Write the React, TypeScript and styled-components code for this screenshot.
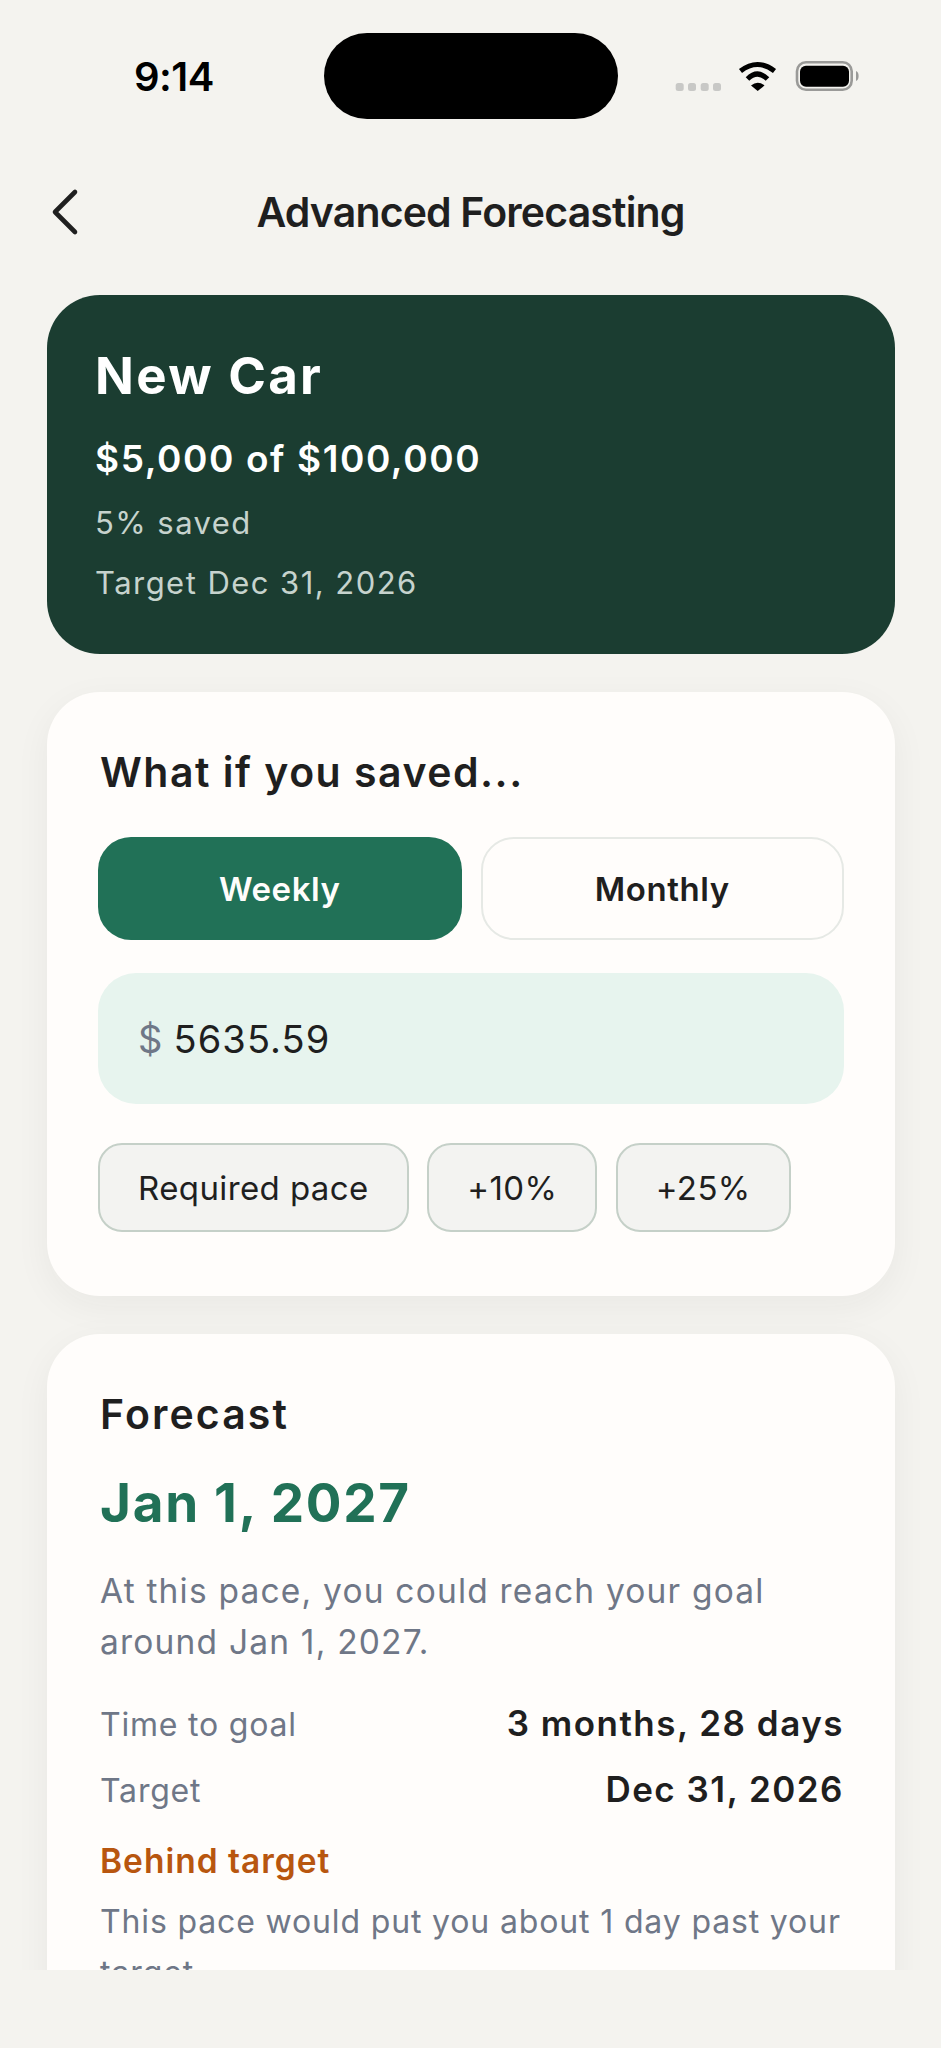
import React from "react";
import styled, { createGlobalStyle } from "styled-components";

const Global = createGlobalStyle`
  html, body { margin: 0; padding: 0; background: #f4f3ef; }
  body { font-family: Inter, "Liberation Sans", sans-serif; color: #1f1f1f; }
`;

const Screen = styled.div`
  width: 941px;
  height: 2048px;
  background: #f4f3ef;
  display: flex;
  flex-direction: column;
  overflow: hidden;
`;

const StatusBar = styled.div`
  height: 176px;
  position: relative;
  box-sizing: border-box;
  flex: none;
`;

const Time = styled.div`
  position: absolute;
  left: 134px;
  top: 55px;
  font-size: 40px;
  line-height: 44px;
  font-weight: 600;
  color: #000;
  letter-spacing: -0.5px;
`;

const Island = styled.div`
  position: absolute;
  left: 324px;
  top: 33px;
  width: 294px;
  height: 86px;
  border-radius: 43px;
  background: #000;
`;

const StatusIcons = styled.svg`
  position: absolute;
  left: 670px;
  top: 55px;
`;

const Header = styled.div`
  height: 72px;
  flex: none;
  display: flex;
  align-items: center;
  justify-content: center;
  position: relative;
`;

const BackIcon = styled.svg`
  position: absolute;
  left: 50px;
  top: 12px;
`;

const Title = styled.h1`
  margin: 0;
  font-size: 41px;
  line-height: 48px;
  font-weight: 600;
  letter-spacing: -0.85px;
  color: #1f1f1f;
`;

const Scroll = styled.div`
  height: 1722px;
  padding: 47px 46px 0 47px;
  box-sizing: border-box;
  overflow: hidden;
  flex: none;
  display: flex;
  flex-direction: column;
  gap: 38px;
`;

const Hero = styled.section`
  height: 359px;
  flex: none;
  box-sizing: border-box;
  padding: 52px 48px 0;
  background: #1b3d31;
  border-radius: 53px;
  color: #fff;
`;

const HeroName = styled.div`
  font-size: 51px;
  line-height: 58px;
  font-weight: 700;
  letter-spacing: 2.3px;
`;

const HeroAmount = styled.div`
  margin: 32px 0 20px;
  font-size: 37px;
  line-height: 44px;
  font-weight: 600;
  letter-spacing: 1.6px;
`;

const HeroNote = styled.div`
  margin-top: 16px;
  font-size: 31px;
  line-height: 44px;
  font-weight: 400;
  letter-spacing: 1.45px;
  color: #c6d3cd;
`;

const Card = styled.section<{ $height?: number }>`
  flex: none;
  box-sizing: border-box;
  background: #fffdfb;
  border-radius: 53px;
  box-shadow: 0 10px 36px rgba(40, 40, 30, 0.05);
  padding: 0 51px;
  ${(p) => (p.$height ? `height: ${p.$height}px;` : "padding-bottom: 60px;")}
`;

const CardTitle = styled.h2`
  margin: 0;
  padding: 55px 0 0 2px;
  font-size: 41px;
  line-height: 50px;
  font-weight: 600;
  letter-spacing: 1.5px;
`;

const Toggle = styled.div`
  margin-top: 40px;
  display: grid;
  grid-template-columns: 1fr 1fr;
  gap: 19px;
`;

const ToggleButton = styled.div<{ $active?: boolean }>`
  height: 103px;
  box-sizing: border-box;
  border-radius: 33px;
  display: flex;
  align-items: center;
  justify-content: center;
  font-size: 33px;
  font-weight: 600;
  letter-spacing: 0.6px;
  background: ${(p) => (p.$active ? "#217157" : "#fffdfb")};
  color: ${(p) => (p.$active ? "#fffdfb" : "#1f1f1f")};
  border: ${(p) => (p.$active ? "none" : "2.4px solid #e6e9e5")};
`;

const AmountField = styled.div`
  margin-top: 33px;
  height: 131px;
  border-radius: 38px;
  background: #e7f4ee;
  display: flex;
  align-items: center;
  padding-left: 40px;
  gap: 10px;
  font-size: 38px;
  letter-spacing: 1.1px;
`;

const Dollar = styled.span`
  color: #6f7787;
`;

const Chips = styled.div`
  margin-top: 39px;
  display: flex;
  gap: 18.5px;
`;

const Chip = styled.div`
  height: 89px;
  box-sizing: border-box;
  padding: 0 38px;
  border-radius: 24px;
  border: 2.4px solid #c5d0c8;
  background: #f3f3f1;
  display: flex;
  align-items: center;
  font-size: 33px;
  font-weight: 420;
  letter-spacing: 0.4px;
`;

const ForecastTitle = styled.h2`
  margin: 0;
  padding: 55px 0 0 2px;
  font-size: 41px;
  line-height: 50px;
  font-weight: 600;
  letter-spacing: 2.1px;
`;

const ForecastDate = styled.div`
  margin-top: 32px;
  padding-left: 2px;
  font-size: 53px;
  line-height: 64px;
  font-weight: 700;
  letter-spacing: 1.7px;
  color: #217157;
`;

const Body = styled.p`
  margin: 31px 0 0;
  padding-left: 2px;
  font-size: 33.5px;
  line-height: 51px;
  letter-spacing: 1.2px;
  color: #6f7787;
`;

const Row = styled.div<{ $top: number }>`
  margin-top: ${(p) => p.$top}px;
  padding-left: 2px;
  display: flex;
  justify-content: space-between;
  align-items: baseline;
`;

const RowLabel = styled.span`
  font-size: 32px;
  line-height: 50px;
  letter-spacing: 0.8px;
  color: #6f7787;
`;

const RowValue = styled.span`
  font-size: 35px;
  line-height: 50px;
  font-weight: 600;
  letter-spacing: 1.5px;
`;

const Status = styled.div`
  margin-top: 23px;
  padding-left: 2px;
  font-size: 33.5px;
  line-height: 44px;
  font-weight: 600;
  letter-spacing: 1px;
  color: #b8560f;
`;

const Note = styled(Body)`
  margin: 13px -4px 0 0;
  font-size: 32px;
  letter-spacing: 0.85px;
`;

export default function App() {
  return (
    <Screen>
      <Global />
      <StatusBar>
        <Time>9:14</Time>
        <Island />
        <StatusIcons width="200" height="50" viewBox="0 0 200 50">
          <g fill="#c8c8c6">
            <rect x="5.7" y="28" width="8" height="8" rx="2.5" />
            <rect x="18" y="28" width="8" height="8" rx="2.5" />
            <rect x="30.7" y="28" width="8" height="8" rx="2.5" />
            <rect x="43" y="28" width="8" height="8" rx="2.5" />
          </g>
          <g fill="none" stroke="#000" strokeWidth="5">
            <path d="M70.5 16 Q87.5 3 104.5 16" />
            <path d="M77.5 24 Q87.5 14 97.5 24" />
          </g>
          <path d="M87.7 36 L81 30.5 Q87.7 25 94.5 30.5 Z" fill="#000" />
          <rect x="127" y="7.3" width="54.7" height="27.4" rx="9" fill="none" stroke="#9a9a98" strokeWidth="2.6" />
          <rect x="130" y="10.7" width="49" height="21" rx="6" fill="#000" />
          <path d="M186 16 C189.5 17 189.5 25 186 26 Z" fill="#9a9a98" />
        </StatusIcons>
      </StatusBar>
      <Header>
        <BackIcon width="32" height="48" viewBox="0 0 32 48" fill="none">
          <path d="M25 4 L5 24 L25 44" stroke="#1f1f1f" strokeWidth="4.6" strokeLinecap="round" strokeLinejoin="round" />
        </BackIcon>
        <Title>Advanced Forecasting</Title>
      </Header>
      <Scroll>
        <Hero>
          <HeroName>New Car</HeroName>
          <HeroAmount>$5,000 of $100,000</HeroAmount>
          <HeroNote>5% saved</HeroNote>
          <HeroNote>Target Dec 31, 2026</HeroNote>
        </Hero>
        <Card $height={604}>
          <CardTitle>What if you saved...</CardTitle>
          <Toggle>
            <ToggleButton $active>Weekly</ToggleButton>
            <ToggleButton>Monthly</ToggleButton>
          </Toggle>
          <AmountField>
            <Dollar>$</Dollar>
            <span>5635.59</span>
          </AmountField>
          <Chips>
            <Chip>Required pace</Chip>
            <Chip>+10%</Chip>
            <Chip>+25%</Chip>
          </Chips>
        </Card>
        <Card>
          <ForecastTitle>Forecast</ForecastTitle>
          <ForecastDate>Jan 1, 2027</ForecastDate>
          <Body>At this pace, you could reach your goal around Jan 1, 2027.</Body>
          <Row $top={30}>
            <RowLabel>Time to goal</RowLabel>
            <RowValue>3 months, 28 days</RowValue>
          </Row>
          <Row $top={14}>
            <RowLabel>Target</RowLabel>
            <RowValue>Dec 31, 2026</RowValue>
          </Row>
          <Status>Behind target</Status>
          <Note>This pace would put you about 1 day past your target.</Note>
        </Card>
      </Scroll>
    </Screen>
  );
}
